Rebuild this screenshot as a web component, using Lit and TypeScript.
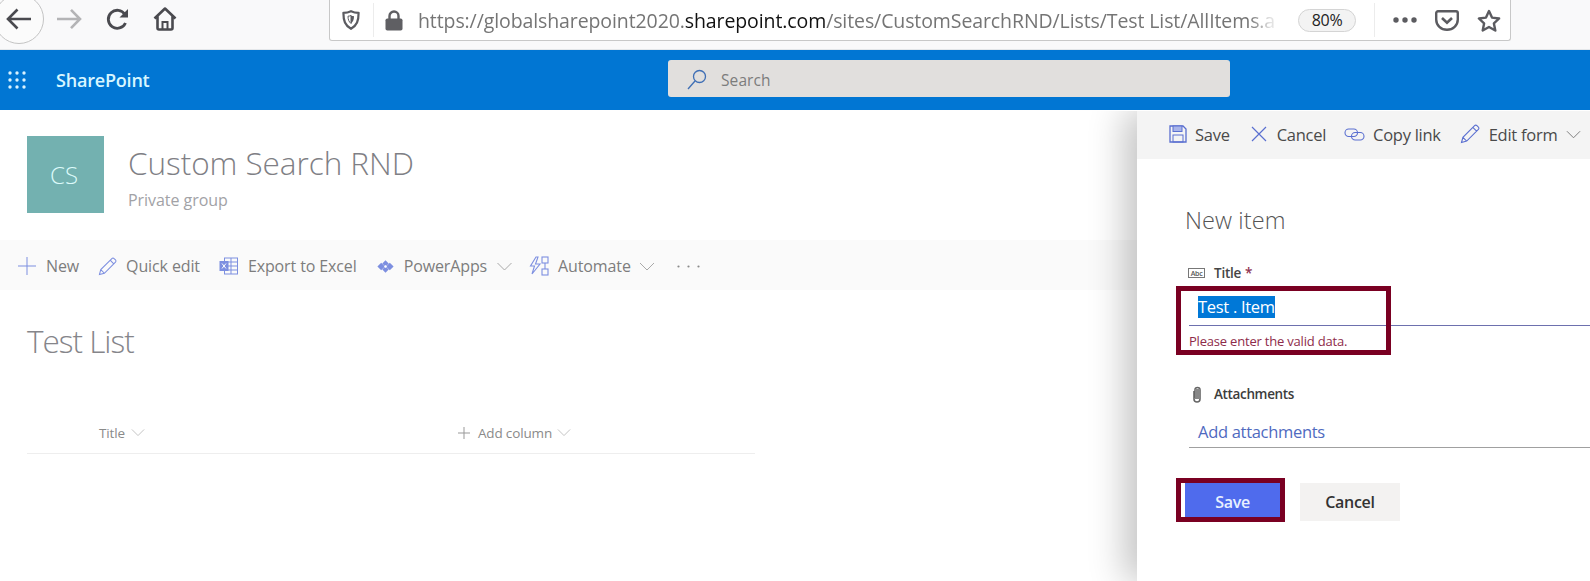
import { LitElement, html, css, svg } from "lit";
import { customElement } from "lit/decorators.js";

const S = (w: number, h: number, vb: string, body: unknown, cls = "") =>
  html`<svg class="ic ${cls}" width=${w} height=${h} viewBox=${vb} fill="none">${body}</svg>`;

const blue = "#7d8fe0";
const chevron = (w = 16, c = "#a9a9a9") =>
  S(w, 9, "0 0 16 9", svg`<path d="M1 1l7 7 7-7" stroke=${c} stroke-width="1"/>`);
const pencil = (w = 20, c = blue) =>
  S(w, w, "0 0 20 20", svg`<path d="M1.5 18.5l1.4-5.2L14.6 1.6a1.6 1.6 0 0 1 2.3 0l1.5 1.5a1.6 1.6 0 0 1 0 2.3L6.7 17.1zM2.9 13.3l3.8 3.8M12.8 3.4l3.8 3.8" stroke=${c} stroke-width="1.1"/>`);

@customElement("app-root")
export class AppRoot extends LitElement {
  static styles = css`
    :host {
      display: block;
      position: relative;
      width: 1590px;
      height: 581px;
      overflow: hidden;
      background: #fff;
      font-family: "Open Sans", "Noto Sans", sans-serif;
    }
    .ic { flex: none; display: block; }

    /* browser chrome */
    .browser {
      height: 50px;
      box-sizing: border-box;
      background: #f9f9fa;
      border-bottom: 1px solid #e4e7ea;
      display: flex;
      align-items: flex-start;
    }
    .back {
      flex: none;
      width: 50px;
      height: 50px;
      margin: -6px 0 0 -6px;
      box-sizing: border-box;
      border: 1px solid #c4c4c4;
      border-radius: 50%;
      background: #fbfbfb;
      display: flex;
      align-items: center;
      justify-content: center;
    }
    .navs {
      display: flex;
      align-items: center;
      gap: 24px;
      height: 38px;
      margin-left: 13px;
    }
    .urlbar {
      margin-left: 152px;
      width: 1182px;
      height: 41px;
      box-sizing: border-box;
      background: #fff;
      border: 1px solid #c8c8c8;
      border-top: none;
      border-radius: 0 0 3px 3px;
      display: flex;
      align-items: center;
    }
    .shield { margin-left: 12px; }
    .vsep { width: 1px; height: 34px; background: #ececec; flex: none; }
    .urlbar .sep1 { margin-left: 13px; }
    .lock { margin-left: 11px; }
    .url {
      margin-left: 15px;
      width: 866px;
      flex: none;
      white-space: nowrap;
      font-size: 19.5px;
      letter-spacing: -0.1px;
      color: #757575;
      -webkit-mask-image: linear-gradient(to right, #000 96%, rgba(0,0,0,0.2) 98.5%);
      mask-image: linear-gradient(to right, #000 96%, rgba(0,0,0,0.2) 98.5%);
    }
    .url b { font-weight: 400; color: #111; }
    .zoompill {
      margin-left: 14px;
      width: 58px;
      height: 23px;
      box-sizing: border-box;
      border: 1px solid #d4d4d4;
      border-radius: 12px;
      background: #f3f3f3;
      color: #222;
      font-size: 16px;
      letter-spacing: -0.3px;
      text-align: center;
      line-height: 21px;
      flex: none;
    }
    .urlbar .sep2 { margin-left: 18px; }
    .dots { margin-left: 18px; }
    .pocket { margin-left: 18px; }
    .star { margin-left: 18px; }

    /* suite bar */
    .suite {
      height: 60px;
      background: #0176d3;
      display: flex;
      align-items: center;
      position: relative;
    }
    .waffle { margin-left: 8px; }
    .brand {
      margin-left: 30px;
      color: #d8f6ff;
      font-size: 18px;
      font-weight: 600;
      letter-spacing: -0.2px;
      width: 100px;
    }
    .search {
      margin: 0 0 4px 512px;
      width: 562px;
      height: 37px;
      background: #e1dfdd;
      border-radius: 3px;
      display: flex;
      align-items: center;
      color: #7c7c7c;
      font-size: 15.5px;
      letter-spacing: 0.1px;
    }
    .search svg { margin: 2px 14px 0 19px; }
    .search span { margin-top: 4px; }

    /* site header */
    .site {
      display: flex;
      padding: 26px 0 0 27px;
      height: 130px;
      box-sizing: border-box;
    }
    .logo {
      width: 77px;
      height: 77px;
      box-sizing: border-box;
      padding-right: 3px;
      background: #73b1b0;
      color: #dcfafa;
      font-size: 24px;
      font-weight: 300;
      display: flex;
      align-items: center;
      justify-content: center;
    }
    .sitetext { margin-left: 24px; padding-top: 6px; }
    .sitename {
      font-size: 31.5px;
      font-weight: 300;
      letter-spacing: -0.05px;
      color: #7f7f85;
      line-height: 42px;
    }
    .private {
      font-size: 16px;
      letter-spacing: -0.05px;
      color: #a2a2a6;
      line-height: 20px;
      margin-top: 6px;
    }

    /* command bar */
    .cmd {
      height: 50px;
      box-sizing: border-box;
      padding: 2px 0 0 18px;
      background: #fafafa;
      display: flex;
      align-items: center;
      color: #7d7d7d;
      font-size: 16px;
      letter-spacing: -0.12px;
    }
    .cmd span { white-space: nowrap; }
    .it { display: flex; align-items: center; }

    .listtitle {
      margin: 30px 0 0 27px;
      font-size: 31.5px;
      font-weight: 300;
      letter-spacing: -1px;
      line-height: 42px;
      color: #85858a;
    }
    .cols {
      margin: 51px 0 0 27px;
      width: 728px;
      height: 41px;
      box-sizing: border-box;
      border-bottom: 1px solid #eeeeee;
      display: flex;
      align-items: center;
      padding: 0 0 1px 72px;
      font-size: 13.5px;
      letter-spacing: -0.15px;
      color: #8a8a8a;
    }

    /* right panel (overlay) */
    .panel {
      position: absolute;
      left: 1137px;
      right: 0;
      top: 111px;
      bottom: 0;
      background: #fff;
      box-shadow: -12px 0 34px rgba(0, 0, 0, 0.24);
      clip-path: inset(0 0 0 -70px);
    }
    .pbar {
      height: 48px;
      box-sizing: border-box;
      padding: 0 0 2px 32px;
      background: #f4f4f4;
      display: flex;
      align-items: center;
      color: #4a4a4a;
      font-size: 16.5px;
      letter-spacing: -0.27px;
    }
    .pbar span { white-space: nowrap; }
    .form { padding: 46px 0 0 48px; }
    .newitem {
      font-size: 23.5px;
      font-weight: 300;
      letter-spacing: 0.1px;
      color: #555;
      line-height: 30px;
    }
    .lab {
      display: flex;
      align-items: center;
      height: 18px;
      margin-top: 29px;
      margin-left: 3px;
      font-size: 13.5px;
      font-weight: 600;
      letter-spacing: -0.25px;
      color: #444;
    }
    .lab svg { margin-right: 9px; }
    .lab em { font-style: normal; color: #8f3250; margin-left: 4px; }
    .field {
      margin: 7px 0 0 4px;
      box-sizing: border-box;
      height: 37px;
      padding: 7px 0 0 9px;
      border-bottom: 1px solid #6d70ae;
      font-size: 16.5px;
      letter-spacing: -0.3px;
      line-height: 22px;
    }
    .sel { background: #0078d7; color: #fff; display: inline-block; }
    .err {
      margin: 6px 0 0 4px;
      font-size: 13px;
      line-height: 18px;
      letter-spacing: -0.2px;
      color: #8e2b4a;
    }
    .att { margin-top: 35px; color: #3c3c3c; letter-spacing: -0.35px; }
    .att svg { margin: 0 12px 0 4px; }
    .link {
      margin: 11px 0 0 4px;
      height: 34px;
      box-sizing: border-box;
      padding: 7px 0 0 9px;
      border-bottom: 1px solid #a0a0a0;
      color: #4f6abf;
      font-size: 16.5px;
      letter-spacing: -0.3px;
      line-height: 22px;
    }
    .btns {
      display: flex;
      align-items: center;
      gap: 20px;
      margin: 35px 0 0 -4px;
    }
    .save, .cancel {
      height: 38px;
      font-size: 16px;
      font-weight: 600;
      letter-spacing: -0.3px;
      display: flex;
      align-items: center;
      justify-content: center;
      box-sizing: border-box;
    }
    .save {
      width: 99px;
      background: #4f6bed;
      color: #e8f0ff;
      border-left: 4px solid #fff;
    }
    .cancel {
      width: 100px;
      background: #f3f2f1;
      color: #333;
    }

    /* annotation frames drawn over the form */
    .mark {
      position: absolute;
      box-sizing: border-box;
      border: 5px solid #7a0022;
      pointer-events: none;
    }
    .m1 { left: 1176px; top: 286px; width: 215px; height: 69px; }
    .m2 { left: 1176px; top: 478px; width: 109px; height: 44px; }
  `;

  render() {
    return html`
      <div class="browser">
        <div class="back">
          ${S(26, 22, "0 0 26 22", svg`<path d="M25 11H2M11.5 1.5L2 11l9.5 9.5" stroke="#4a4a4f" stroke-width="2.6"/>`)}
        </div>
        <div class="navs">
          ${S(25, 22, "0 0 25 22", svg`<path d="M0 11h23M14 1.8L23 11l-9 9.2" stroke="#b4b4b6" stroke-width="2.6"/>`)}
          ${S(23, 23, "0 0 23 23", svg`<path d="M19.5 15a9 9 0 1 1-.6-8.6" stroke="#4a4a4f" stroke-width="2.8"/><path d="M22 1v8.5h-8.5z" fill="#4a4a4f"/>`)}
          ${S(24, 24, "0 0 24 24", svg`<path d="M1.5 11.5L12 1.5l10.5 10M4.5 9.5v11.5a1.5 1.5 0 0 0 1.5 1.5h12a1.5 1.5 0 0 0 1.5-1.5V9.5" stroke="#4a4a4f" stroke-width="2.6" stroke-linejoin="round"/><path d="M9.5 22v-7h5v7" stroke="#4a4a4f" stroke-width="2"/>`)}
        </div>
        <div class="urlbar">
          ${S(18, 20, "0 0 18 20", svg`<path d="M9 1.2c2.8 1.3 5 1.6 7.6 1.6 0 8-1.6 12.6-7.6 16C3 15.4 1.4 10.8 1.4 2.8 4 2.8 6.2 2.5 9 1.2z" stroke="#5b5b60" stroke-width="2.2" stroke-linejoin="round"/><path d="M9 5.5c1 .4 1.6.6 3 .7 0 3.3-.8 5.5-3 7.3z" fill="#5b5b60"/><path d="M9 5.5v8c-2.2-1.8-3-4-3-7.3 1.4-.1 2-.3 3-.7z" stroke="#5b5b60" stroke-width="1"/>`, "shield")}
          <div class="vsep sep1"></div>
          ${S(18, 21, "0 0 18 21", svg`<path d="M4.5 9V6a4.5 4.5 0 0 1 9 0v3" stroke="#5f5f63" stroke-width="2.4"/><rect x="0.5" y="8.5" width="17" height="12" rx="1.8" fill="#5f5f63"/>`, "lock")}
          <div class="url">https://globalsharepoint2020.<b>sharepoint.com</b>/sites/CustomSearchRND/Lists/Test List/AllItems.a</div>
          <div class="zoompill">80%</div>
          <div class="vsep sep2"></div>
          ${S(24, 6, "0 0 24 6", svg`<circle cx="3" cy="3" r="2.7" fill="#5b5b60"/><circle cx="12" cy="3" r="2.7" fill="#5b5b60"/><circle cx="21" cy="3" r="2.7" fill="#5b5b60"/>`, "dots")}
          ${S(24, 21, "0 0 24 21", svg`<path d="M3 1.3h18a1.8 1.8 0 0 1 1.8 1.8v6.4C22.8 15.5 18 19.7 12 19.7S1.2 15.5 1.2 9.5V3.1A1.8 1.8 0 0 1 3 1.3z" stroke="#5b5b60" stroke-width="2.4"/><path d="M7 8l5 4.8L17 8" stroke="#5b5b60" stroke-width="2.6"/>`, "pocket")}
          ${S(24, 23, "0 0 24 23", svg`<path d="M12 2l3 6.6 7.1.9-5.2 4.9 1.4 7.1L12 18l-6.3 3.5 1.4-7.1L1.9 9.5 9 8.6z" stroke="#5b5b60" stroke-width="2.4" stroke-linejoin="round"/>`, "star")}
        </div>
      </div>

      <div class="suite">
        ${S(18, 18, "0 0 18 18", svg`${[2, 9, 16].flatMap((y) => [2, 9, 16].map((x) => svg`<circle cx=${x} cy=${y} r="1.7" fill="#d8f2ff"/>`))}`, "waffle")}
        <div class="brand">SharePoint</div>
        <div class="search">
          ${S(20, 21, "0 0 20 21", svg`<circle cx="12.5" cy="7.5" r="6" stroke="#3f6fb5" stroke-width="1.3"/><path d="M8 12L1 20" stroke="#3f6fb5" stroke-width="1.3"/>`)}
          <span>Search</span>
        </div>
      </div>

      <div class="site">
        <div class="logo">CS</div>
        <div class="sitetext">
          <div class="sitename">Custom Search RND</div>
          <div class="private">Private group</div>
        </div>
      </div>

      <div class="cmd">
        <div class="it">${S(18, 18, "0 0 18 18", svg`<path d="M9 0v18M0 9h18" stroke=${blue} stroke-width="1"/>`)}<span style="margin-left:10px">New</span></div>
        <div class="it" style="margin-left:19px">${pencil(19)}<span style="margin-left:9px">Quick edit</span></div>
        <div class="it" style="margin-left:19px">${S(19, 18, "0 0 19 18", svg`<rect x="5.5" y="1" width="13" height="16" stroke=${blue} stroke-width="1"/><path d="M5.5 5h13M5.5 9h13M5.5 13h13M12 1v16" stroke=${blue} stroke-width="1"/><rect x="0.5" y="4" width="9" height="10" fill=${blue}/><path d="M3 6.5l4 5M7 6.5l-4 5" stroke="#fff" stroke-width="1"/>`)}<span style="margin-left:10px">Export to Excel</span></div>
        <div class="it" style="margin-left:20px">${S(17, 13, "0 0 17 13", svg`<path d="M4.2 2.7L8 6.5 4.2 10.3.4 6.5zM12.8 2.7l3.8 3.8-3.8 3.8L9 6.5zM8.5.3l3.2 3.2-3.2 3-3.2-3zM8.5 6.5l3.2 3-3.2 3.2-3.2-3.2z" fill=${blue}/><path d="M8.5 5L10 6.5 8.5 8 7 6.5z" fill="#fff"/>`)}<span style="margin-left:10px">PowerApps</span><span style="margin-left:9px;display:block">${chevron(17)}</span></div>
        <div class="it" style="margin-left:16px">${S(20, 20, "0 0 20 20", svg`<path d="M7 1L1.5 10h4L3 18l8-10H6.5L9 1z" stroke=${blue} stroke-width="1.1"/><rect x="13" y="1" width="6" height="6" stroke=${blue} stroke-width="1.1"/><rect x="13" y="13" width="6" height="6" stroke=${blue} stroke-width="1.1"/><path d="M16 7v6" stroke=${blue} stroke-width="1.1"/>`)}<span style="margin-left:9px">Automate</span><span style="margin-left:8px;display:block">${chevron(16)}</span></div>
        <div class="it" style="margin-left:22px">${S(23, 3, "0 0 23 3", svg`<circle cx="1.5" cy="1.5" r="1.1" fill="#8a8a8a"/><circle cx="11.5" cy="1.5" r="1.1" fill="#8a8a8a"/><circle cx="21.5" cy="1.5" r="1.1" fill="#8a8a8a"/>`)}</div>
      </div>

      <div class="listtitle">Test List</div>
      <div class="cols">
        <span>Title</span><span style="margin:0 0 0 6px;display:block">${chevron(14, "#bbb")}</span>
        <span style="margin-left:313px;display:block">${S(12, 12, "0 0 12 12", svg`<path d="M6 0v12M0 6h12" stroke="#999" stroke-width="1"/>`)}</span>
        <span style="margin-left:8px">Add column</span><span style="margin-left:5px;display:block">${chevron(14, "#bbb")}</span>
      </div>

      <div class="panel">
        <div class="pbar">
          <div class="it">${S(18, 18, "0 0 18 18", svg`<path d="M1 1h13l3 3v13H1z" stroke="#5a6fd0" stroke-width="1.3"/><rect x="4" y="1" width="9" height="5.5" fill="#a8b4ea" stroke="#5a6fd0" stroke-width="1"/><rect x="4" y="10" width="10" height="7" stroke="#5a6fd0" stroke-width="1"/>`)}<span style="margin-left:8px">Save</span></div>
          <div class="it" style="margin-left:21px">${S(16, 16, "0 0 16 16", svg`<path d="M1 1l14 14M15 1L1 15" stroke="#5a6fd0" stroke-width="1.2"/>`)}<span style="margin-left:10px">Cancel</span></div>
          <div class="it" style="margin-left:18px">${S(21, 13, "0 0 21 13", svg`<rect x="1" y="1" width="12.5" height="7.5" rx="3.7" stroke="#5a6fd0" stroke-width="1.1"/><rect x="7.5" y="4.5" width="12.5" height="7.5" rx="3.7" stroke="#5a6fd0" stroke-width="1.1"/>`)}<span style="margin-left:8px">Copy link</span></div>
          <div class="it" style="margin-left:19px">${pencil(20, "#5a6fd0")}<span style="margin-left:9px">Edit form</span><span style="margin-left:9px;display:block">${chevron(15, "#777")}</span></div>
        </div>
        <div class="form">
          <div class="newitem">New item</div>
          <div class="lab">
            <svg class="ic" width="17" height="10" viewBox="0 0 17 10" fill="none"><rect x="0.5" y="0.5" width="16" height="9" stroke="#777" stroke-width="1"/><text x="8.5" y="7.5" font-size="7" text-anchor="middle" fill="#555" font-family="Open Sans, sans-serif">Abc</text></svg>
            Title<em>*</em>
          </div>
          <div class="field"><span class="sel">Test . Item</span></div>
          <div class="err">Please enter the valid data.</div>
          <div class="lab att">
            ${S(10, 17, "0 0 10 17", svg`<path d="M2 5v8a3 3 0 0 0 6 0V4a2.5 2.5 0 0 0-5 0v8" stroke="#666" stroke-width="1.6"/><path d="M3 3h5v10H3z" fill="#888"/>`)}
            Attachments
          </div>
          <div class="link">Add attachments</div>
          <div class="btns">
            <div class="save">Save</div>
            <div class="cancel">Cancel</div>
          </div>
        </div>
      </div>

      <div class="mark m1"></div>
      <div class="mark m2"></div>
    `;
  }
}
